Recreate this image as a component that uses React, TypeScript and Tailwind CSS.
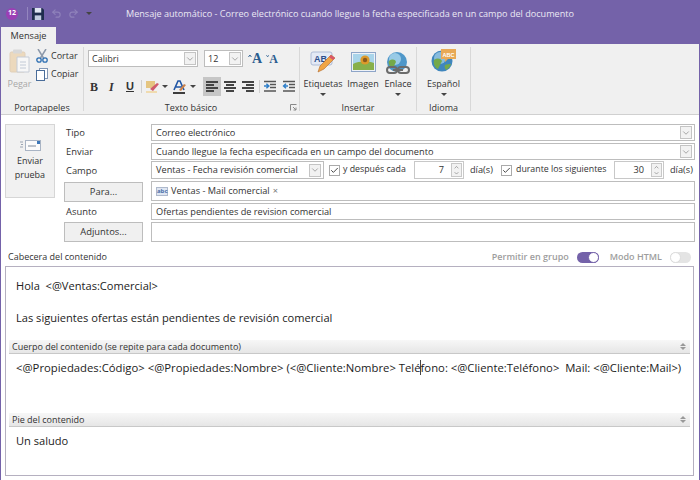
import React from 'react';
import { ChevronDown, ChevronUp, Check, Redo2, Undo2 } from 'lucide-react';

const Caret = ({ className = '' }: { className?: string }) => (
  <span className={`block w-0 h-0 border-l-[3px] border-r-[3px] border-t-[3px] border-l-transparent border-r-transparent border-t-[#444] shrink-0 ${className}`} />
);

const DropBtn = ({ className = '' }: { className?: string }) => (
  <span className={`flex items-center justify-center w-[12px] h-[13px] bg-[#f2f2f2] border border-[#c4c4c4] shrink-0 ${className}`}>
    <ChevronDown size={10} strokeWidth={1.5} className="text-[#777]" />
  </span>
);

const Spin = ({ value }: { value: string }) => (
  <div className="w-[50px] h-[18px] border border-[#c8c8c8] bg-white flex items-center justify-end pr-[1px] shrink-0">
    <span className="mr-[7px] text-[#333]">{value}</span>
    <span className="w-[11px] h-[14px] bg-[#f2f2f2] border border-[#c8c8c8] flex flex-col items-center justify-center">
      <ChevronUp size={7} strokeWidth={2} className="text-[#666] -mb-[1px]" />
      <ChevronDown size={7} strokeWidth={2} className="text-[#666]" />
    </span>
  </div>
);

const Tick = () => (
  <span className="w-[11px] h-[11px] border border-[#aaa] bg-white flex items-center justify-center shrink-0">
    <Check size={11} strokeWidth={2.4} className="text-[#333]" />
  </span>
);

const SectionBar = ({ title }: { title: string }) => (
  <div className="h-[14px] mx-[3px] flex items-center justify-between bg-gradient-to-b from-[#f7f7f7] to-[#e6e6e6] border-b border-[#c8c8c8] pl-[3px] pr-[3px] text-[9px] text-[#333]">
    <span>{title}</span>
    <span className="flex flex-col gap-[1px] mr-[1px]">
      <span className="w-0 h-0 border-l-[3px] border-r-[3px] border-b-[3px] border-l-transparent border-r-transparent border-b-[#999]" />
      <span className="w-0 h-0 border-l-[3px] border-r-[3px] border-t-[3px] border-l-transparent border-r-transparent border-t-[#999]" />
    </span>
  </div>
);

const Lines = ({ active, kind }: { active?: boolean; kind: 'left' | 'center' | 'right' }) => {
  const w = [12, 8, 12, 8];
  return (
    <span className={`w-[18px] h-[19px] flex flex-col justify-center gap-[1px] px-[3px] ${active ? 'bg-[#c6c6c6]' : ''} ${kind === 'left' ? 'items-start' : kind === 'center' ? 'items-center' : 'items-end'}`}>
      {w.map((x, i) => (
        <span key={i} className="h-[2px] bg-[#444]" style={{ width: x }} />
      ))}
    </span>
  );
};

const Indent = ({ flip }: { flip?: boolean }) => (
  <svg width="14" height="13" viewBox="0 0 14 13">
    <path d="M1 1.5h12M7 4.5h6M7 7.5h6M1 11h12" stroke="#555" strokeWidth="1.3" />
    <path d={flip ? 'M6 6H2M4 3.8 1.6 6 4 8.2' : 'M1 6h4M3.4 3.8 5.8 6 3.4 8.2'} stroke="#2f7fc9" strokeWidth="1.5" fill="none" />
  </svg>
);

const FontGrow = ({ big }: { big?: boolean }) => (
  <span className="flex items-start">
    <svg width="4" height="4" viewBox="0 0 4 4" className="mt-[2px]">
      <path d={big ? 'M0.500 3 2 1l1.500 2' : 'M0.500 1 2 3l1.500-2'} stroke="#2a5d8f" fill="none" />
    </svg>
    <span className={`font-bold text-[#2a5d8f] font-['Liberation_Serif',serif] leading-none ${big ? 'text-[14px]' : 'text-[12px] mt-[1px]'}`}>A</span>
  </span>
);

export default function App() {
  return (
    <div className="w-[700px] h-[480px] overflow-hidden bg-[#7462a9] flex flex-col text-[9px] text-[#333] font-['Open_Sans','Noto_Sans',sans-serif]">
      {/* title bar */}
      <div className="h-[27px] flex items-center shrink-0">
        <span className="ml-[6px] w-[12px] h-[12px] rounded-full bg-[#9b3fb5] flex items-center justify-center text-[7px] font-bold text-white shrink-0">12</span>
        <span className="ml-[9px] w-px h-[13px] bg-[#9486bf]" />
        <svg className="ml-[4px] shrink-0" width="12" height="12" viewBox="0 0 13 13">
          <path d="M0 0h11l2 2v11H0Z" fill="#1f2d4d" />
          <path d="M3 0h7v5H3Z" fill="#dfe5f1" />
          <path d="M3 8h7v5H3Z" fill="#c3cde0" />
        </svg>
        <Undo2 size={11} strokeWidth={2.5} className="ml-[7px] text-[#8f82bb] shrink-0" />
        <Redo2 size={11} strokeWidth={2.5} className="ml-[6px] text-[#8f82bb] shrink-0" />
        <Caret className="ml-[7px] border-t-[#2c2450]" />
        <span className="flex-1 text-center text-[9.1px] text-[#ebe8f4] whitespace-nowrap">
          Mensaje automático - Correo electrónico cuando llegue la fecha especificada en un campo del documento
        </span>
        <span className="w-[92px] shrink-0" />
      </div>
      {/* tabs */}
      <div className="h-[17px] shrink-0 pl-[1px]">
        <div className="w-[55px] h-[17px] bg-[#f0f0f0] flex items-center justify-center text-[9.2px]">Mensaje</div>
      </div>
      {/* ribbon */}
      <div className="h-[71px] shrink-0 ml-[1px] mr-[1px] bg-[#f0f0f0] border-b border-[#d0d0d0] flex">
        {/* Portapapeles */}
        <div className="w-[83px] border-r border-[#d8d8d8] my-[3px] flex flex-col">
          <div className="flex h-[50px] shrink-0">
            <div className="w-[34px] flex flex-col items-center pl-[3px]">
              <svg className="mt-[2px] shrink-0" width="22" height="24" viewBox="0 0 22 24">
                <rect x="1" y="3" width="15" height="20" rx="1.5" fill="#ecd9bd" stroke="#e0cfb8" />
                <rect x="4" y="0.5" width="9" height="4" rx="1" fill="#d8d8d8" />
                <path d="M8 8h12v15H8Z" fill="#f7f7f7" stroke="#c6ccd6" />
                <path d="M11 13h6M11 16h6M11 19h6" stroke="#c2cad6" />
              </svg>
              <span className="mt-[4px] text-[#a8a8a8]">Pegar</span>
            </div>
            <div className="flex flex-col gap-[4px] pt-[2px] ml-[1px]">
              <div className="flex items-center gap-[3px] h-[14px]">
                <svg width="12" height="14" viewBox="0 0 12 14">
                  <path d="M2 0 7.5 9M10 0 4.5 9" stroke="#8d99aa" strokeWidth="1.5" />
                  <circle cx="3" cy="11" r="2.2" fill="none" stroke="#2e6fb2" strokeWidth="1.3" />
                  <circle cx="9" cy="11" r="2.2" fill="none" stroke="#2e6fb2" strokeWidth="1.3" />
                </svg>
                <span>Cortar</span>
              </div>
              <div className="flex items-center gap-[3px] h-[14px]">
                <svg width="12" height="13" viewBox="0 0 12 13">
                  <rect x="3.5" y="0.5" width="8" height="10" fill="#fff" stroke="#8297b5" />
                  <rect x="0.5" y="2.5" width="8" height="10" fill="#fff" stroke="#4a6d9a" />
                </svg>
                <span>Copiar</span>
              </div>
            </div>
          </div>
          <div className="text-center mt-[4px] leading-[14px] shrink-0">Portapapeles</div>
        </div>
        {/* Texto basico */}
        <div className="w-[216px] border-r border-[#d8d8d8] my-[3px] pl-[4px] flex flex-col relative">
          <div className="flex items-center h-[17px] mt-[3px] shrink-0">
            <div className="w-[110px] h-[17px] bg-white border border-[#bdbdbd] flex items-center justify-between pl-[3px] pr-[1px]">
              <span>Calibri</span>
              <DropBtn />
            </div>
            <div className="ml-[6px] w-[39px] h-[17px] bg-white border border-[#bdbdbd] flex items-center justify-between pl-[3px] pr-[1px]">
              <span>12</span>
              <DropBtn />
            </div>
            <span className="ml-[5px] w-[14px]"><FontGrow big /></span>
            <span className="ml-[4px] w-[12px]"><FontGrow /></span>
          </div>
          <div className="flex items-center h-[19px] mt-[10px] shrink-0 text-[#333]">
            <span className="ml-[2px] w-[19px] font-bold font-['Liberation_Serif',serif] text-[12px]">B</span>
            <span className="w-[17px] italic font-bold font-['Liberation_Serif',serif] text-[12px]">I</span>
            <span className="w-[15px] underline font-bold font-['Liberation_Sans',sans-serif] text-[11px]">U</span>
            <span className="w-px h-[13px] bg-[#cfcfcf]" />
            <svg className="ml-[4px] shrink-0" width="13" height="13" viewBox="0 0 13 13">
              <rect x="0" y="1" width="9" height="7" fill="#e5c580" />
              <path d="M4 9 11 3l2 1-6 7Z" fill="#cf5a6b" />
              <path d="M0 12h11" stroke="#f1d49a" strokeWidth="1.5" />
            </svg>
            <Caret className="ml-[3px]" />
            <svg className="ml-[5px] shrink-0" width="13" height="14" viewBox="0 0 13 14">
              <path d="M1 10 5 1h2l4 9M3 7h6" stroke="#1f55a5" strokeWidth="1.6" fill="none" />
              <path d="M6 10l5-6 2 1-5 6Z" fill="#c9824d" />
              <path d="M0 13h12" stroke="#111" strokeWidth="1.6" />
            </svg>
            <Caret className="ml-[4px]" />
            <span className="ml-[7px]"><Lines active kind="left" /></span>
            <Lines kind="center" />
            <Lines kind="right" />
            <span className="ml-[2px] w-px h-[13px] bg-[#cfcfcf]" />
            <span className="ml-[3px]"><Indent /></span>
            <span className="ml-[5px]"><Indent flip /></span>
          </div>
          <div className="text-center mt-[5px] leading-[14px] pr-[5px] shrink-0">Texto básico</div>
          <svg className="absolute right-[2px] bottom-0" width="7" height="7" viewBox="0 0 7 7">
            <path d="M0.5 6.5v-6h6M3 3l3 3M6 3.5V6H3.500" stroke="#888" fill="none" />
          </svg>
        </div>
        {/* Insertar */}
        <div className="w-[117px] border-r border-[#d8d8d8] my-[3px] flex flex-col">
          <div className="flex h-[50px] shrink-0 pt-[3px] pl-[1px]">
            <div className="w-[44px] flex flex-col items-center">
              <svg className="mt-[1px] shrink-0" width="26" height="22" viewBox="0 0 26 22">
                <rect x="1" y="1" width="21" height="13" rx="2" fill="#e3e9f5" stroke="#aebcd6" />
                <text x="4" y="11" fontSize="9" fontWeight="700" fill="#2c4f8d" fontFamily="Liberation Sans">AB</text>
                <path d="M8 21l2-6L21 4l4 3-11 11Z" fill="#f0a545" stroke="#b46a2a" strokeWidth="0.6" />
                <path d="M21 4l4 3-2 2-4-3Z" fill="#d9566a" />
              </svg>
              <span className="mt-[4px] leading-[14px]">Etiquetas</span>
              <Caret className="mt-[2px]" />
            </div>
            <div className="w-[36px] flex flex-col items-center">
              <svg className="mt-[2px] shrink-0" width="25" height="20" viewBox="0 0 25 20">
                <rect x="0.5" y="0.5" width="24" height="19" fill="#eef2f8" stroke="#8ea5c8" />
                <rect x="2" y="2" width="21" height="16" fill="#a9d4ea" />
                <path d="M2 12c6-3 14-3 21-1v7H2Z" fill="#88b04b" />
                <circle cx="14" cy="8" r="4.6" fill="#dd9a2b" />
                <circle cx="14" cy="8" r="2.2" fill="#8a5a1d" />
              </svg>
              <span className="mt-[5px] leading-[14px]">Imagen</span>
            </div>
            <div className="w-[34px] flex flex-col items-center">
              <svg className="mt-[2px] shrink-0" width="24" height="23" viewBox="0 0 24 23">
                <circle cx="11" cy="10" r="10" fill="#4f97c9" />
                <circle cx="9" cy="7" r="6" fill="#b8dff2" opacity="0.7" />
                <path d="M3 9c3-2 6-2 7 1l-3 6c-3-1-5-4-4-7Z" fill="#74a94a" />
                <rect x="1" y="15" width="10" height="6" rx="3" fill="none" stroke="#6b6b6b" strokeWidth="2" />
                <rect x="12" y="15" width="11" height="6" rx="3" fill="none" stroke="#6b6b6b" strokeWidth="2" />
                <path d="M7 18h10" stroke="#6b6b6b" strokeWidth="2" />
              </svg>
              <span className="mt-[2px] leading-[14px]">Enlace</span>
              <Caret className="mt-[2px]" />
            </div>
          </div>
          <div className="text-center mt-[4px] leading-[14px] shrink-0">Insertar</div>
        </div>
        {/* Idioma */}
        <div className="w-[54px] border-r border-[#d8d8d8] my-[3px] flex flex-col">
          <div className="h-[50px] shrink-0 flex flex-col items-center pt-[2px]">
            <svg className="shrink-0" width="25" height="23" viewBox="0 0 25 23">
              <circle cx="11" cy="12" r="10.500" fill="#3f86bd" />
              <circle cx="9" cy="9" r="6" fill="#b8dff2" opacity="0.6" />
              <path d="M3 11c3-2 6-2 8 1l-4 8c-3-1-5-5-4-9Z" fill="#74a94a" />
              <path d="M14 16c2-1 4-1 6-1-1 3-3 5-5 6-1-2-2-3-1-5Z" fill="#74a94a" />
              <path d="M10 0h15v10h-8l-3 3v-3h-4Z" fill="#e8a956" />
              <text x="11.500" y="7.500" fontSize="5.500" fontWeight="700" fill="#fff" fontFamily="Liberation Sans">ABC</text>
            </svg>
            <span className="mt-[5px] leading-[14px]">Español</span>
            <Caret className="mt-[2px]" />
          </div>
          <div className="text-center mt-[4px] leading-[14px] shrink-0">Idioma</div>
        </div>
      </div>
      {/* form */}
      <div className="flex-1 ml-[1px] mr-[1px] bg-white flex flex-col pl-[4px] pr-[5px] pt-[9px] pb-[3px] min-h-0">
        <div className="flex shrink-0">
          <div className="w-[50px] h-[74px] bg-[#f1f1f1] border border-[#d6d6d6] flex flex-col items-center pt-[15px] shrink-0">
            <svg width="21" height="11" viewBox="0 0 21 11">
              <rect x="5.5" y="0.5" width="15" height="10" fill="#fbfbfb" stroke="#a9b4c4" />
              <path d="M8 6h8" stroke="#7f8a9a" />
              <rect x="17" y="1" width="3" height="3" fill="#3d77b8" />
              <path d="M0 2h3M1 4.500h2M0 7h3" stroke="#9ba5b3" />
            </svg>
            <span className="mt-[3px] leading-[14px] text-center">Enviar<br />prueba</span>
          </div>
          <div className="w-[86px] ml-[10px] shrink-0 flex flex-col text-[9.4px]">
            <div className="h-[19px] flex items-center pl-[1px]">Tipo</div>
            <div className="h-[19px] flex items-center pl-[1px]">Enviar</div>
            <div className="h-[19px] flex items-center pl-[1px]">Campo</div>
            <div className="h-[21px] flex items-start pt-[1px] -ml-[1px]">
              <div className="w-[79px] h-[20px] bg-[#f0f0f0] border border-[#bdbdbd] flex items-center justify-center">Para...</div>
            </div>
            <div className="h-[19px] flex items-center pl-[1px] mt-[1px]">Asunto</div>
            <div className="h-[21px] flex items-start -ml-[1px]">
              <div className="w-[79px] h-[20px] bg-[#f0f0f0] border border-[#bdbdbd] flex items-center justify-center">Adjuntos...</div>
            </div>
          </div>
          <div className="flex-1 min-w-0 flex flex-col mr-[-1px] text-[9.2px]">
            <div className="h-[17px] border border-[#bdbdbd] flex items-center justify-between pl-[4px] pr-[2px]">
              <span>Correo electrónico</span>
              <DropBtn />
            </div>
            <div className="h-[17px] mt-[2px] border border-[#bdbdbd] flex items-center justify-between pl-[4px] pr-[2px]">
              <span>Cuando llegue la fecha especificada en un campo del documento</span>
              <DropBtn />
            </div>
            <div className="h-[18px] mt-[1px] flex items-center whitespace-nowrap">
              <div className="w-[173px] h-[18px] border border-[#bdbdbd] flex items-center justify-between pl-[4px] pr-[2px] shrink-0">
                <span>Ventas - Fecha revisión comercial</span>
                <DropBtn />
              </div>
              <span className="ml-[5px]"><Tick /></span>
              <span className="ml-[3px] w-[71px] text-[8.8px]">y después cada</span>
              <Spin value="7" />
              <span className="ml-[6px] w-[31px]">día(s)</span>
              <Tick />
              <span className="ml-[4px] w-[98px] text-[8.8px]">durante los siguientes</span>
              <Spin value="30" />
              <span className="ml-[6px]">día(s)</span>
            </div>
            <div className="h-[20px] mt-[2px] border border-[#bdbdbd] flex items-center pl-[4px] gap-[3px]">
              <span className="w-[12px] h-[9px] bg-[#dfe6f2] border border-[#aeb9cc] text-[6px] leading-[7px] text-[#4a6ea8] text-center font-bold">abc</span>
              <span>Ventas - Mail comercial</span>
              <span className="text-[#777]">×</span>
            </div>
            <div className="h-[17px] mt-[2px] border border-[#bdbdbd] flex items-center pl-[4px]">Ofertas pendientes de revision comercial</div>
            <div className="h-[20px] mt-[2px] border border-[#bdbdbd]" />
          </div>
        </div>
        <div className="h-[22px] mt-[1px] shrink-0 flex items-center justify-between pl-[3px] pr-[3px]">
          <span className="mt-[4px]">Cabecera del contenido</span>
          <div className="flex items-center mt-[4px] font-semibold text-[#9d9d9d]">
            <span>Permitir en grupo</span>
            <span className="ml-[8px] w-[22px] h-[11px] rounded-full bg-[#7462a9] flex justify-end">
              <span className="w-[11px] h-[11px] rounded-full bg-white border border-[#7462a9]" />
            </span>
            <span className="ml-[11px]">Modo HTML</span>
            <span className="ml-[8px] w-[21px] h-[11px] rounded-full bg-[#e4e4e4] flex">
              <span className="w-[11px] h-[11px] rounded-full bg-white border border-[#dcdcdc]" />
            </span>
          </div>
        </div>
        <div className="h-[210px] shrink-0 border border-[#b5b0c0] flex flex-col text-[11.1px] text-[#222]">
          <div className="h-[73px] pl-[10px] pt-[10px] leading-[17px] shrink-0">
            <div>Hola&nbsp; &lt;@Ventas:Comercial&gt;</div>
            <div className="mt-[15px]">Las siguientes ofertas están pendientes de revisión comercial</div>
          </div>
          <SectionBar title="Cuerpo del contenido (se repite para cada documento)" />
          <div className="h-[59px] pl-[10px] pt-[5px] leading-[17px] shrink-0 whitespace-nowrap text-[11.3px]">
            &lt;@Propiedades:Código&gt; &lt;@Propiedades:Nombre&gt; (&lt;@Cliente:Nombre&gt; Telé<span className="border-l border-[#444] -ml-px" />fono: &lt;@Cliente:Teléfono&gt;&nbsp; Mail: &lt;@Cliente:Mail&gt;)
          </div>
          <SectionBar title="Pie del contenido" />
          <div className="pl-[10px] pt-[5px] leading-[17px]">Un saludo</div>
        </div>
      </div>
    </div>
  );
}
